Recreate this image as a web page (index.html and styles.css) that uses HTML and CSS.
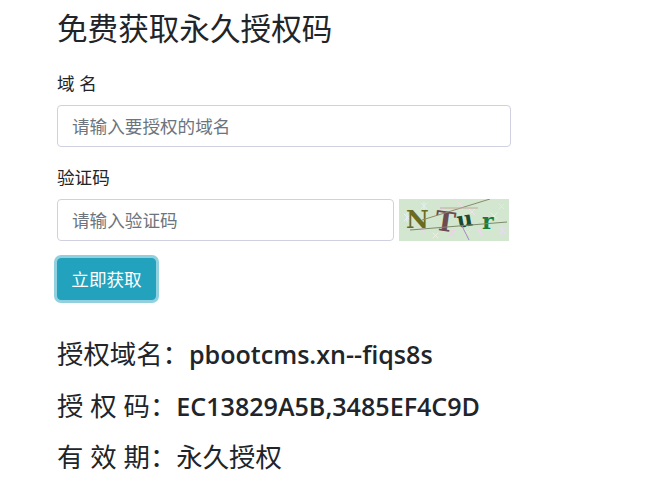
FILE: index.html
```html
<!DOCTYPE html>
<html lang="zh-CN">
<head>
  <meta charset="UTF-8" />
  <meta name="viewport" content="width=device-width, initial-scale=1.0"/>
  <title>免费获取永久授权码</title>
  <link rel="stylesheet" href="styles.css">
</head>
<body>
  <div class="container">
    <h3>免费获取永久授权码</h3>

    <form class="form">
      <div class="form-group">
        <label for="domain">域 名</label>
        <input type="text" id="domain" placeholder="请输入要授权的域名">
      </div>

      <div class="form-group">
        <label for="code">验证码</label>
        <div class="code-row">
          <input type="text" id="code" placeholder="请输入验证码">
          <svg class="captcha" viewBox="0 0 110 42" width="110" height="42">
            <rect width="110" height="42" fill="#d3e6cf"/>
            <g stroke-width="1" stroke-linecap="round">
              <path d="M5 15l7 7M12 15l-7 7M8 14v9" stroke="#e8f0fa"/>
              <path d="M20 28l6 6M26 28l-6 6" stroke="#ecd6ec"/>
              <path d="M22 4l6 6M28 4l-6 6M25 3v8" stroke="#dff0f4"/>
              <path d="M40 6l6 6M46 6l-6 6" stroke="#e6dcec"/>
              <path d="M50 31l6 6M56 31l-6 6M53 30v8" stroke="#f0cfe6"/>
              <path d="M58 2l6 6M64 2l-6 6" stroke="#f0d8e8"/>
              <path d="M70 10l6 6M76 10l-6 6" stroke="#f2e2ee"/>
              <path d="M78 30l6 6M84 30l-6 6M81 29v8" stroke="#ecd8f0"/>
              <path d="M92 14l6 6M98 14l-6 6" stroke="#e2f4d8"/>
              <path d="M100 5l5 5M105 5l-5 5" stroke="#d8f4d0"/>
              <path d="M100 28l7 7M107 28l-7 7M103 27v9" stroke="#e8dcf0"/>
              <path d="M34 34l5 5M39 34l-5 5" stroke="#f0f0e0"/>
              <path d="M66 31l5 5M71 31l-5 5" stroke="#f0e0f0"/>
              <path d="M86 16l4 4M90 16l-4 4" stroke="#f0d8ec"/>
            </g>
            <text class="captcha-n" x="7" y="29">N</text>
            <text class="captcha-t" x="36" y="32" transform="rotate(8 46 24)">T</text>
            <text class="captcha-u" x="58" y="28" transform="rotate(-10 64 23)">u</text>
            <text class="captcha-r" x="83" y="30">r</text>
            <path d="M23 21L91 0" stroke="#8a8a6a" fill="none"/>
            <path d="M41 9h38" stroke="#c4a8a0" fill="none"/>
            <path d="M11 31L108 23" stroke="#7d8a6a" fill="none"/>
            <path d="M63 27l7 14" stroke="#a888c8" fill="none"/>
          </svg>
        </div>
      </div>

      <button type="button" class="btn">立即获取</button>
    </form>

    <div class="result">
      <p>授权域名：<strong>pbootcms.xn--fiqs8s</strong></p>
      <p>授 权 码：<strong>EC13829A5B,3485EF4C9D</strong></p>
      <p>有 效 期：永久授权</p>
    </div>
  </div>
</body>
</html>
```

FILE: styles.css
```css
body {
  font-family: "Open Sans", "Noto Sans CJK SC", sans-serif;
  font-size: 17.6px;
  line-height: 1.5;
  color: #212529;
  background: white;
  margin: 0;
}
.container {
  width: 454px;
  padding: 10px 0 0 57px;
}
h3 {
  font-size: 30.6px;
  font-weight: 400;
  line-height: 37px;
  margin: 0 0 23px;
}
.form-group {
  margin-bottom: 17px;
}
label {
  display: block;
  margin-bottom: 8.6px;
}
input {
  display: block;
  width: 100%;
  height: 42px;
  box-sizing: border-box;
  padding: 6px 14px;
  font: inherit;
  color: #495057;
  border: 1px solid #cfd1e0;
  border-radius: 4px;
}
input::placeholder {
  color: #6c757d;
}
.code-row {
  display: flex;
  align-items: center;
  gap: 5px;
}
.code-row input {
  width: 337px;
  flex: none;
}
.captcha {
  display: block;
}
.captcha text {
  font-family: "DejaVu Serif", serif;
  font-weight: bold;
}
.captcha-n {
  font-size: 25px;
  fill: #6b6a1e;
}
.captcha-t {
  font-size: 27px;
  fill: #6d4a52;
}
.captcha-u {
  font-size: 22px;
  fill: #1c4a2e;
}
.captcha-r {
  font-size: 22px;
  fill: #1c7a3a;
}
.btn {
  display: block;
  width: 99px;
  height: 42px;
  padding: 0;
  font: inherit;
  color: white;
  background: #23a2be;
  border: 1px solid #23a2be;
  border-radius: 4px;
  box-shadow: 0 0 0 3px rgba(35, 162, 190, 0.5);
}
.result {
  margin-top: 35px;
}
.result p {
  font-size: 26.4px;
  line-height: 39.6px;
  margin: 0 0 12px;
}
.result strong {
  font-size: 25.1px;
  font-weight: 600;
}
```
